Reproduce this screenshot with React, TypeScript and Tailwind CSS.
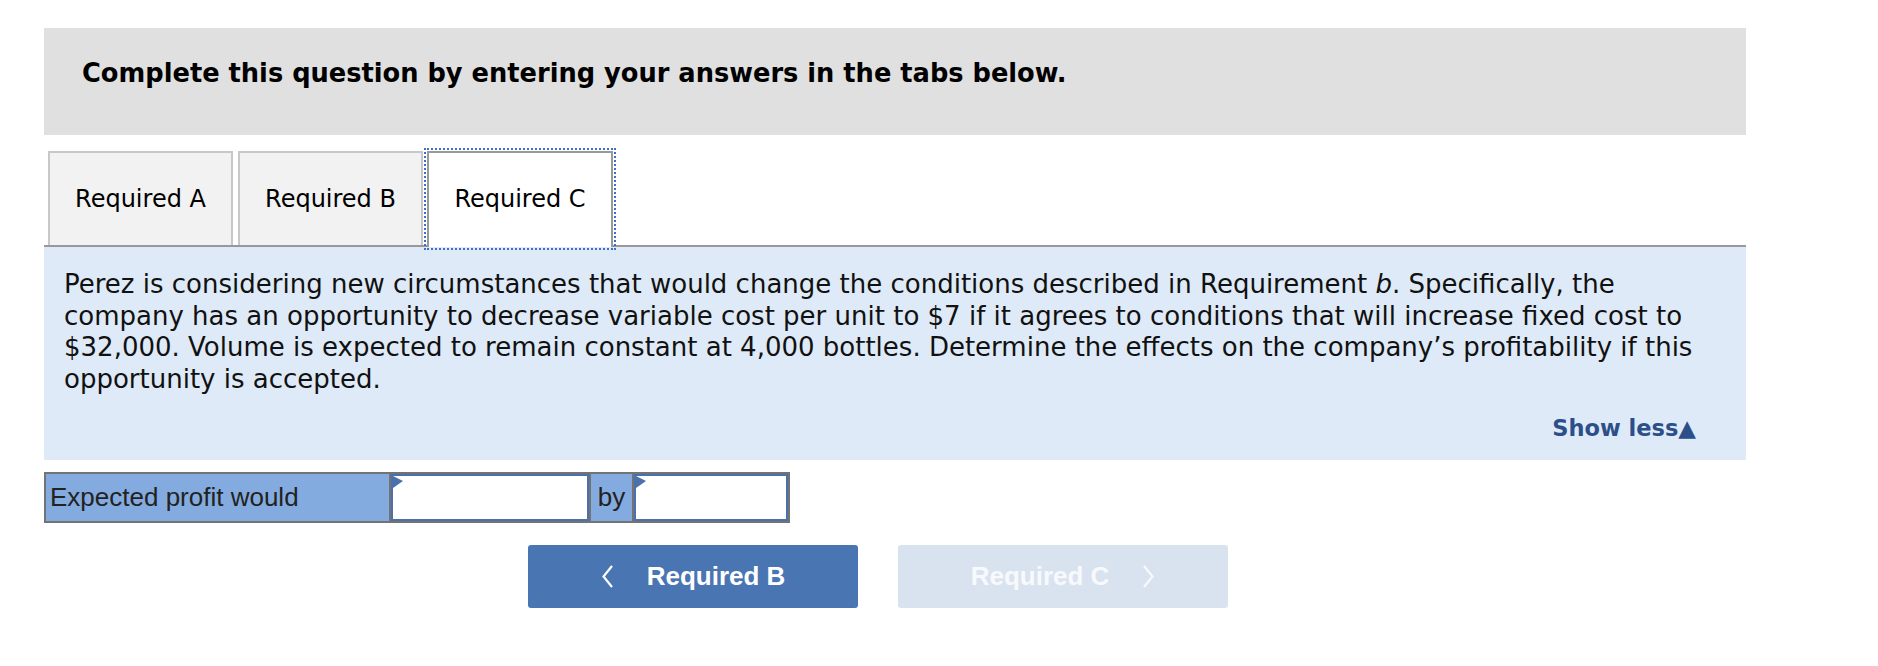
import React from 'react'

const verdana = "font-['DejaVu_Sans','Verdana',sans-serif]"
const arial = "font-['Liberation_Sans','Arial',sans-serif]"

function Flag() {
  return (
    <svg className="absolute left-0 top-0" width="10" height="12" viewBox="0 0 10 12">
      <polygon points="0,0 10,5 0,12" fill="#4a70ad" />
    </svg>
  )
}

function Chevron({ dir, color }: { dir: 'left' | 'right'; color: string }) {
  return (
    <svg width="13" height="23" viewBox="0 0 13 23" fill="none">
      <path
        d={dir === 'left' ? 'M11 1 L2.5 11.5 L11 22' : 'M2 1 L10.5 11.5 L2 22'}
        stroke={color}
        strokeWidth="2.2"
      />
    </svg>
  )
}

export default function App() {
  return (
    <div className={`w-[1878px] h-[666px] bg-white ${verdana} text-black`}>
      <div className="pt-[28px] pl-[44px] w-[1746px]">
        {/* Cabecera */}
        <div className="h-[107px] bg-[#e0e0e0] pl-[38px] pt-[29px]">
          <h1 className="text-[25.7px] font-bold leading-[32px]">
            Complete this question by entering your answers in the tabs below.
          </h1>
        </div>

        {/* Pestañas */}
        <div className="flex items-end gap-[5px] pl-[4px] mt-[16px] text-[24px]">
          <div className="w-[185px] h-[94px] bg-[#f2f2f2] border-2 border-b-0 border-[#c8c8c8] flex items-center justify-center">
            Required A
          </div>
          <div className="w-[185px] h-[94px] bg-[#f2f2f2] border-2 border-b-0 border-[#c8c8c8] flex items-center justify-center">
            Required B
          </div>
          <div className="relative z-10 -mb-[2px] -ml-[1px] w-[186px] h-[96px] bg-white border-2 border-b-0 border-[#999] outline-2 outline-dotted outline-[#3f6fc4] outline-offset-[1px] flex items-center justify-center pb-[2px]">
            Required C
          </div>
        </div>

        {/* Enunciado */}
        <div className="bg-[#deeaf7] border-t-2 border-[#999] pl-[20px] pr-[20px] pt-[22px] pb-[17px]">
          <p className="text-[26px] leading-[31.5px] text-[#111]">
            Perez is considering new circumstances that would change the conditions described in Requirement <i>b</i>. Specifically, the
            <br />
            company has an opportunity to decrease variable cost per unit to $7 if it agrees to conditions that will increase fixed cost to
            <br />
            $32,000. Volume is expected to remain constant at 4,000 bottles. Determine the effects on the company’s profitability if this
            <br />
            opportunity is accepted.
          </p>
          <div className="flex justify-end pr-[30px] mt-[19px]">
            <button className="flex items-center text-[22.5px] font-bold text-[#2c4f8a] leading-[29px]">
              Show less
              <span className="text-[23px] leading-[29px]">▲</span>
            </button>
          </div>
        </div>

        {/* Respuesta */}
        <div className={`mt-[12px] flex w-[746px] h-[51px] border-2 border-[#737373] bg-[#737373] gap-[2px] ${arial}`}>
          <div className="w-[343px] bg-[#84abdf] flex items-center pl-[4px] text-[26px] text-[#222]">
            Expected profit would
          </div>
          <div className="relative w-[198px] bg-white border-2 border-[#4a70ad]">
            <Flag />
          </div>
          <div className="w-[41px] bg-[#84abdf] flex items-center justify-center text-[26px] text-[#222]">
            by
          </div>
          <div className="relative flex-1 bg-white border-2 border-[#4a70ad]">
            <Flag />
          </div>
        </div>

        {/* Navegación */}
        <div className={`mt-[22px] flex gap-[40px] pl-[484px] ${arial}`}>
          <button className="w-[330px] h-[63px] rounded-[3px] bg-[#4a75b3] text-white text-[26px] font-bold flex items-center justify-center gap-[33px]">
            <Chevron dir="left" color="#ffffff" />
            Required B
          </button>
          <button className="w-[330px] h-[63px] rounded-[3px] bg-[#d9e3ef] text-[#f7f9fc] text-[26px] font-bold flex items-center justify-center gap-[33px]">
            Required C
            <Chevron dir="right" color="#f7f9fc" />
          </button>
        </div>
      </div>
    </div>
  )
}
